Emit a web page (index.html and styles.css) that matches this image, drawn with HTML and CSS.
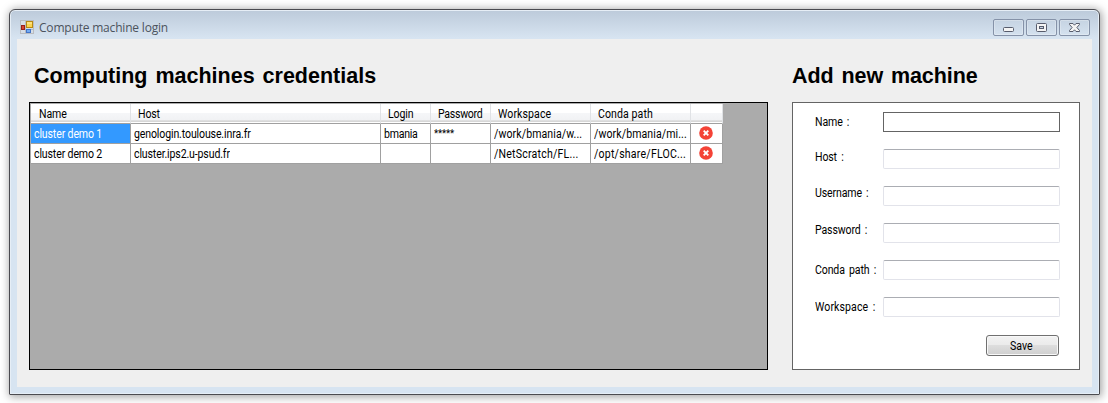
FILE: index.html
```html
<!DOCTYPE html>
<html lang="en">
<head>
<meta charset="utf-8">
<title>Compute machine login</title>
<link rel="stylesheet" href="styles.css">
</head>
<body>
<div class="window">
  <header class="titlebar">
    <svg class="app-icon" width="14" height="14" viewBox="0 0 14 14">
      <rect x=".5" y=".5" width="13" height="13" fill="#d5dde6" stroke="#b9bcc0"/>
      <path d="M5.500 1v12M1 9.500h12" stroke="#b9bcc0" fill="none"/>
      <rect x="1.500" y="5.500" width="3" height="4" fill="#d8452f" stroke="#98201a"/>
      <rect x="6.500" y="1.500" width="6" height="6" fill="#fbd450" stroke="#b88912"/>
      <path d="M7 3h5" stroke="#fff0a8"/>
      <rect x="6.500" y="9.500" width="4" height="3" fill="#72aaf2" stroke="#4274c8"/>
    </svg>
    <span class="caption">Compute machine login</span>
    <div class="controls">
      <span class="control"><svg width="29" height="15" viewBox="0 0 29 15"><rect x="9.500" y="7.500" width="10" height="4" rx="1" fill="#f4f4f4" stroke="#575c6c"/></svg></span>
      <span class="control"><svg width="29" height="15" viewBox="0 0 29 15"><rect x="9.500" y="3.500" width="10" height="8" rx="1" fill="#f4f4f4" stroke="#575c6c"/><rect x="12.500" y="6.500" width="4" height="2" fill="#c8d5e3" stroke="#575c6c"/></svg></span>
      <span class="control"><svg width="29" height="15" viewBox="0 0 29 15"><path d="M9.500 3.500H13L14.500 5.200 16 3.500H19.500V4.500L16.900 7.500 19.500 10.500V11.500H16L14.500 9.800 13 11.500H9.500V10.500L12.100 7.500 9.500 4.500Z" fill="#f4f4f4" stroke="#575c6c"/></svg></span>
    </div>
  </header>
  <main class="client">
    <section class="machines">
      <h1 class="heading heading-list">Computing machines credentials</h1>
      <div class="grid">
        <div class="row head">
          <span class="first"><i>Name</i></span><span><i>Host</i></span><span><i>Login</i></span><span class="tight"><i>Password</i></span><span class="loose"><i>Workspace</i></span><span class="loose"><i>Conda path</i></span><span></span>
        </div>
        <div class="row">
          <span class="selected"><i>cluster demo 1</i></span><span><i>genologin.toulouse.inra.fr</i></span><span class="tight"><i>bmania</i></span><span class="stars"><i>*****</i></span><span class="path"><i>/work/bmania/w...</i></span><span class="path"><i>/work/bmania/mi...</i></span>
          <span class="action"><svg width="14" height="14" viewBox="0 0 14 14"><circle cx="7" cy="7" r="6.800" fill="#f44336"/><path d="M4.700 4.700l4.600 4.600M9.300 4.700L4.700 9.300" stroke="#fff" stroke-width="1.900"/></svg></span>
        </div>
        <div class="row">
          <span><i>cluster demo 2</i></span><span><i>cluster.ips2.u-psud.fr</i></span><span></span><span></span><span class="wide"><i>/NetScratch/FL...</i></span><span class="wide"><i>/opt/share/FLOC...</i></span>
          <span class="action"><svg width="14" height="14" viewBox="0 0 14 14"><circle cx="7" cy="7" r="6.800" fill="#f44336"/><path d="M4.700 4.700l4.600 4.600M9.300 4.700L4.700 9.300" stroke="#fff" stroke-width="1.900"/></svg></span>
        </div>
      </div>
    </section>
    <section class="add">
      <h1 class="heading heading-add">Add new machine</h1>
      <form class="panel">
        <div class="field"><label for="name"><i>Name :</i></label><input id="name" class="focused"></div>
        <div class="field"><label class="raised" for="host"><i>Host :</i></label><input id="host"></div>
        <div class="field"><label class="raised high" for="user"><i>Username :</i></label><input id="user"></div>
        <div class="field"><label class="raised high" for="pass"><i>Password :</i></label><input id="pass" type="password"></div>
        <div class="field"><label for="conda"><i>Conda path :</i></label><input id="conda"></div>
        <div class="field"><label class="loose" for="work"><i>Workspace :</i></label><input id="work"></div>
        <button type="button" class="save"><i>Save</i></button>
      </form>
    </section>
  </main>
</div>
</body>
</html>
```
FILE: styles.css
```css
* { box-sizing: border-box; }
body {
  margin: 0;
  padding: 9px;
  height: 403px;
  overflow: hidden;
  background: #fff;
  font: 12px/14px Roboto, "Liberation Sans", sans-serif;
  letter-spacing: -.15px;
  color: #000;
}
/* Condensed interface lettering */
i {
  display: inline-block;
  font-style: normal;
  transform: scaleX(.88);
  transform-origin: 0 0;
}
.window {
  width: 1091px;
  height: 386px;
  border: 1px solid #4b4b50;
  border-radius: 6px 6px 1px 1px;
  background: linear-gradient(#bccada, #d7e4f1 28px);
  box-shadow: inset 0 0 0 1px #e6eef6, 1px 1px 8px 1px rgba(0, 0, 0, .36);
  padding: 0 7px 7px;
}
.titlebar {
  height: 29px;
  display: flex;
  align-items: flex-start;
  padding: 10px 2px 0 3px;
}
.caption {
  margin: 0 auto 0 5px;
  font: 12px/15px "Open Sans", sans-serif;
  color: #4b535d;
  letter-spacing: -.19px;
}
.controls { display: flex; gap: 2px; margin-top: -1px; }
.control {
  width: 31px;
  height: 17px;
  border: 1px solid #8592a8;
  border-radius: 2px;
  box-shadow: inset 0 0 0 1px rgba(255, 255, 255, .25);
}
.control svg { display: block; }
.client {
  height: 348px;
  background: #efefef;
  display: flex;
  gap: 24px;
  padding: 0 12px;
}
.machines { width: 739px; }
.add { width: 288px; }
.heading {
  margin: 0;
  height: 63px;
  padding-top: 25px;
  font: bold 21.5px/25px "Liberation Sans", sans-serif;
  word-spacing: 2px;
  white-space: nowrap;
}
.heading-list { padding-left: 5px; letter-spacing: 0; }
.heading-add { letter-spacing: -.08px; }
.grid {
  height: 268px;
  border: 1px solid #000;
  background: #ababab;
  padding-left: 1px;
}
.row {
  display: grid;
  grid-template-columns: 100px 250px 50px 60px 100px 100px 32px;
  width: 692px;
  height: 20px;
}
.row span {
  border-right: 1px solid #a0a0a0;
  border-bottom: 1px solid #a0a0a0;
  background: #fff;
  padding: 3px 0 0 3px;
  white-space: nowrap;
}
.row.head { height: 21px; padding-top: 1px; }
.row.head span {
  padding: 3px 0 0 7px;
  border-right-color: #e0e2e5;
  background: linear-gradient(#fff 45%, #f5f6f8 50%, #f1f2f4 85%, #d5d5d5 88%, #d5d5d5 92%, #fff 94%);
}
.row.head .first { padding-left: 8px; }
.row .tight { letter-spacing: -.3px; }
.row .path { letter-spacing: .1px; }
.row .wide { letter-spacing: .24px; }
.loose { letter-spacing: .1px; }
.row .selected { background: #3399ff; color: #fff; }
.row .stars { font-size: 11px; letter-spacing: -.2px; }
.row .action { padding: 2px 0 0 8px; }
.action svg { display: block; }
.panel {
  height: 268px;
  border: 1px solid #646464;
  background: #fff;
  padding: 9px 19px 0 22px;
}
.field {
  display: flex;
  height: 37px;
}
.field label { width: 68px; padding-top: 3px; white-space: nowrap; word-spacing: 2px; }
.field .raised { padding-top: 1px; }
.field .high { padding-top: 0; }
.field input {
  width: 177px;
  height: 20px;
  border: 1px solid #e2e3ea;
  border-top-color: #abadb3;
  border-radius: 2px;
  background: #fff;
  padding: 0 3px;
  outline: 0;
}
.field .focused { border-color: #646464; border-radius: 0; }
.save {
  display: block;
  width: 73px;
  height: 21px;
  margin: 1px 1px 0 auto;
  padding: 0;
  border: 1px solid #707070;
  border-radius: 3px;
  box-shadow: inset 0 0 0 1px #f8f8f8;
  background: linear-gradient(#f2f2f2, #ebebeb 45%, #dddddd 50%, #cfcfcf);
  font: inherit;
  color: #000;
}
```
